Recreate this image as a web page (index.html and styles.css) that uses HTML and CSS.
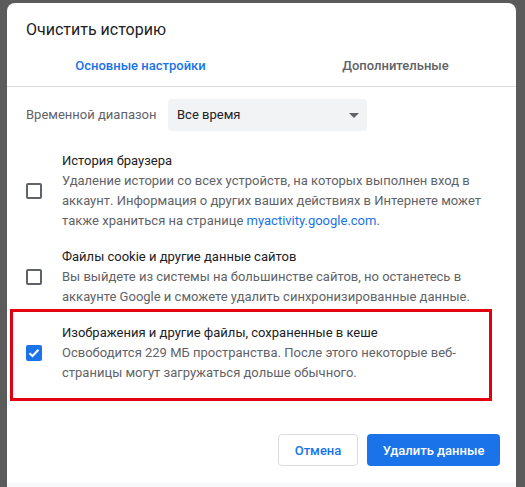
FILE: index.html
```html
<!DOCTYPE html>
<html lang="ru">
<head>
    <meta charset="UTF-8">
    <meta name="viewport" content="width=device-width, initial-scale=1.0">
    <title>Очистить историю</title>
    <link rel="stylesheet" href="styles.css">
</head>
<body>

    <div class="dialog">
        <h1 class="dialog-title">Очистить историю</h1>

        <div class="tabs">
            <a href="#" class="tab active">Основные настройки</a>
            <a href="#" class="tab">Дополнительные</a>
        </div>

        <div class="content">
            <div class="range-row">
                <span class="range-label">Временной диапазон</span>
                <div class="select">
                    <span>Все время</span>
                    <span class="arrow"></span>
                </div>
            </div>

            <div class="item">
                <span class="checkbox"></span>
                <div class="item-text">
                    <div class="item-title">История браузера</div>
                    <div class="item-desc">Удаление истории со всех устройств, на которых выполнен вход в аккаунт. Информация о других ваших действиях в Интернете может также храниться на странице <a href="#">myactivity.google.com</a>.</div>
                </div>
            </div>

            <div class="item">
                <span class="checkbox"></span>
                <div class="item-text">
                    <div class="item-title">Файлы cookie и другие данные сайтов</div>
                    <div class="item-desc">Вы выйдете из системы на большинстве сайтов, но останетесь в аккаунте Google и сможете удалить синхронизированные данные.</div>
                </div>
            </div>

            <div class="item highlight">
                <span class="checkbox checked">
                    <svg width="12" height="10" viewBox="0 0 12 10"><path d="M1.5 5.2 L4.5 8 L10.5 1.8" fill="none" stroke="#fff" stroke-width="2"/></svg>
                </span>
                <div class="item-text">
                    <div class="item-title">Изображения и другие файлы, сохраненные в кеше</div>
                    <div class="item-desc">Освободится 229 МБ пространства. После этого некоторые веб-страницы могут загружаться дольше обычного.</div>
                </div>
            </div>
        </div>

        <div class="buttons">
            <button class="btn cancel">Отмена</button>
            <button class="btn primary">Удалить данные</button>
        </div>

        <div class="footer"></div>
    </div>

</body>
</html>
```

FILE: styles.css
```css
body {
    margin: 0;
    padding: 3px 0 0 7px;
    height: 484px;
    overflow: hidden;
    background: #5b5b5b;
    font-family: Roboto, "Liberation Sans", Arial, sans-serif;
}
.dialog {
    width: 509px;
    height: 484px;
    background: white;
    border-radius: 8px 8px 0 0;
    overflow: hidden;
    display: flex;
    flex-direction: column;
}
.dialog-title {
    margin: 17px 0 6px 19px;
    font-size: 16px;
    font-weight: 400;
    line-height: 20px;
    color: #202124;
}
.tabs {
    display: grid;
    grid-template-columns: 255px 1fr;
    padding-left: 6px;
    border-bottom: 1px solid #dadce0;
}
.tab {
    height: 40px;
    line-height: 40px;
    text-align: center;
    font-size: 13px;
    font-weight: 500;
    color: #5f6368;
    text-decoration: none;
}
.tab + .tab {
    padding-left: 7px;
}
.tab.active {
    color: #1a73e8;
}
.content {
    padding: 12px 24px 0 19px;
    font-size: 13px;
    line-height: 20px;
}
.range-row {
    display: flex;
    align-items: center;
}
.range-label {
    width: 142px;
    color: #5f6368;
}
.select {
    width: 199px;
    height: 32px;
    box-sizing: border-box;
    padding: 0 8px 0 9px;
    background: #f1f3f4;
    border-radius: 4px;
    display: flex;
    align-items: center;
    justify-content: space-between;
    color: #202124;
}
.arrow {
    width: 0;
    height: 0;
    border-left: 5px solid transparent;
    border-right: 5px solid transparent;
    border-top: 5px solid #5f6368;
}
.item {
    position: relative;
    display: flex;
    align-items: center;
    margin-top: 16px;
}
.range-row + .item {
    margin-top: 20px;
}
.checkbox {
    flex: none;
    width: 16px;
    height: 16px;
    box-sizing: border-box;
    border: 2px solid #5f6368;
    border-radius: 2px;
    margin-right: 20px;
    display: flex;
    align-items: center;
    justify-content: center;
}
.checkbox.checked {
    background: #1a73e8;
    border-color: #1a73e8;
}
.item-title {
    color: #202124;
}
.item-desc {
    color: #5f6368;
}
.item-desc a {
    color: #1a73e8;
    text-decoration: none;
}
.highlight::after {
    content: "";
    position: absolute;
    top: -14px;
    bottom: -18px;
    left: -16px;
    right: 0;
    border: 3px solid #e3000f;
}
.buttons {
    display: flex;
    justify-content: flex-end;
    gap: 9px;
    padding: 0 16px;
    margin-top: 51px;
}
.btn {
    height: 32px;
    padding: 0 12px;
    border-radius: 4px;
    font-family: inherit;
    font-size: 13px;
    font-weight: 500;
    white-space: nowrap;
    cursor: pointer;
}
.cancel {
    width: 80px;
    background: white;
    color: #1a73e8;
    border: 1px solid #dadce0;
}
.primary {
    width: 133px;
    background: #1a73e8;
    color: white;
    border: none;
}
.footer {
    margin-top: 16px;
    flex: 1;
    background: #f8f9fa;
}
```
